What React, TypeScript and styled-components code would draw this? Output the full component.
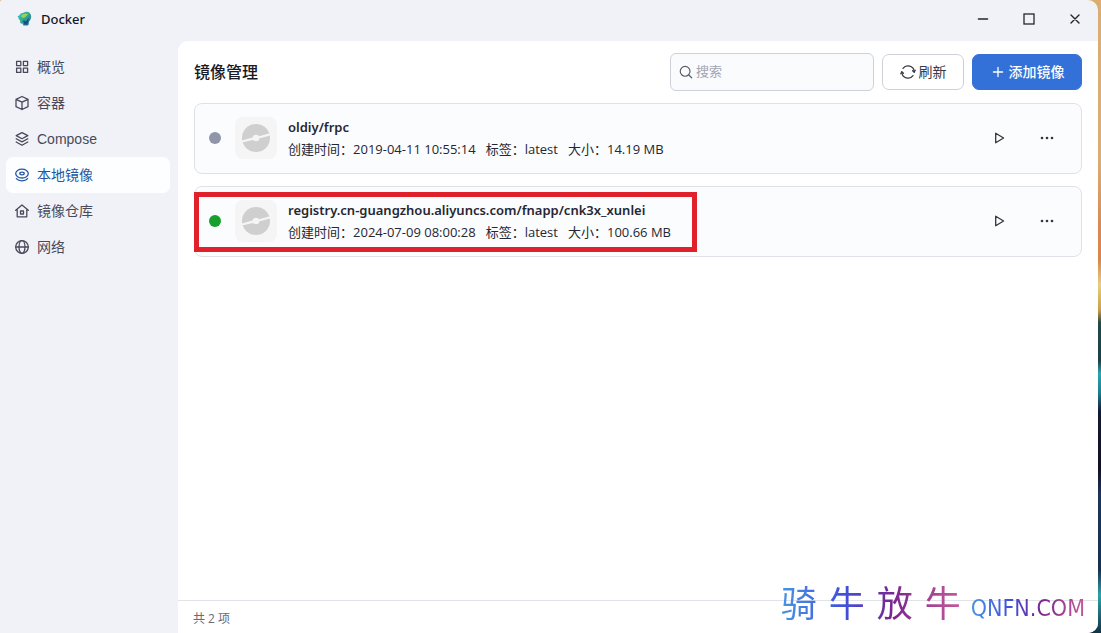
import React from "react";
import styled, { createGlobalStyle, css } from "styled-components";

const GlobalStyle = createGlobalStyle`
  *, *::before, *::after { box-sizing: border-box; }
  body {
    margin: 0;
    font-family: "Open Sans", "Noto Sans CJK SC", sans-serif;
    font-size: 14px;
    color: #1c1f2b;
  }
  button, input { font: inherit; color: inherit; }
  ul { list-style: none; margin: 0; padding: 0; }
  svg { display: block; flex: none; }
`;

const Desktop = styled.div`
  min-height: 100vh;
  display: flex;
  padding-right: 3px;
  background: linear-gradient(
    180deg,
    #d9ae70 0%,
    #dcae72 25%,
    #d98a50 36%,
    #d9854a 41%,
    #e6cf80 45%,
    #c9a040 49%,
    #22484a 51%,
    #1c3f4a 57%,
    #2ba5b0 59%,
    #1d7f90 62%,
    #141a33 65%,
    #120f28 74%,
    #1c3458 78%,
    #173050 90%,
    #2aa5a8 94%,
    #123244 100%
  );
`;

const Window = styled.div`
  flex: 1;
  min-width: 0;
  display: flex;
  flex-direction: column;
  background: #f1f2f7;
  border-radius: 2px 10px 10px 0;
  overflow: hidden;
`;

const TitleBar = styled.header`
  display: flex;
  align-items: center;
  height: 41px;
  padding: 0 0 3px 17px;
`;

const AppName = styled.span`
  flex: 1;
  margin-left: 8px;
  font-family: "Noto Sans", sans-serif;
  font-size: 13px;
  font-weight: 500;
  color: #15171f;
`;

const WindowButton = styled.button`
  display: grid;
  place-items: center;
  width: 46px;
  height: 36px;
  padding: 0;
  border: 0;
  background: none;
  color: #24262e;
`;

const Body = styled.div`
  flex: 1;
  display: flex;
`;

const Sidebar = styled.nav`
  flex: none;
  width: 178px;
  padding: 8px 8px 8px 6px;
`;

const NavLink = styled.a<{ $active?: boolean }>`
  display: flex;
  align-items: center;
  gap: 7px;
  height: 36px;
  padding: 0 8px;
  border-radius: 7px;
  font-family: "Liberation Sans", "Noto Sans CJK SC", sans-serif;
  font-size: 14px;
  line-height: 20px;
  color: #484a5c;
  text-decoration: none;
  ${(p) =>
    p.$active &&
    css`
      background: #fdfeff;
      color: #24569f;
    `}
`;

const Main = styled.main`
  flex: 1;
  min-width: 0;
  display: flex;
  flex-direction: column;
  background: #fff;
  border-top-left-radius: 10px;
`;

const Content = styled.div`
  flex: 1;
  padding: 12px 16px;
`;

const Toolbar = styled.div`
  display: flex;
  align-items: center;
  gap: 8px;
  margin-bottom: 12px;
`;

const PageTitle = styled.h1`
  flex: 1;
  margin: 0;
  font-size: 16px;
  line-height: 24px;
  font-weight: 500;
  color: #171924;
`;

const SearchBox = styled.label`
  display: flex;
  align-items: center;
  gap: 3px;
  width: 204px;
  height: 38px;
  padding: 0 8px;
  border: 1px solid #cfd1da;
  border-radius: 6px;
  background: #fafbfd;
  color: #555866;
`;

const SearchInput = styled.input`
  flex: 1;
  min-width: 0;
  padding: 0 0 2px;
  border: 0;
  outline: 0;
  background: none;
  font-size: 13px;
  &::placeholder { color: #a2a5b0; opacity: 1; }
`;

const ToolButton = styled.button<{ $primary?: boolean }>`
  display: flex;
  align-items: center;
  justify-content: center;
  gap: 3px;
  height: 36px;
  width: ${(p) => (p.$primary ? "110px" : "82px")};
  padding: 0 0 1px;
  border: 1px solid ${(p) => (p.$primary ? "#3371d8" : "#cfd1d8")};
  border-radius: 7px;
  background: ${(p) => (p.$primary ? "#3371d8" : "#fff")};
  color: ${(p) => (p.$primary ? "#fff" : "#383a45")};
  line-height: 20px;
  font-weight: ${(p) => (p.$primary ? 500 : 400)};
`;

const ImageList = styled.ul`
  display: flex;
  flex-direction: column;
  gap: 12px;
`;

const Card = styled.li`
  position: relative;
  display: flex;
  align-items: center;
  height: 71px;
  padding: 0 16px 2px 14px;
  border: 1px solid #dfe1e7;
  border-radius: 8px;
  background: #fbfcfe;
`;

const StatusDot = styled.span<{ $running: boolean }>`
  width: 12px;
  height: 12px;
  border-radius: 50%;
  background: ${(p) => (p.$running ? "#17a02c" : "#9195a9")};
`;

const Thumb = styled.div`
  display: grid;
  place-items: center;
  width: 42px;
  height: 42px;
  margin: 0 11px 0 14px;
  border-radius: 8px;
  background: #f5f5f6;
`;

const Info = styled.div`
  flex: 1;
  min-width: 0;
`;

const ImageName = styled.h2`
  margin: 0;
  font-family: "Noto Sans", "Noto Sans CJK SC", sans-serif;
  font-size: 13px;
  line-height: 22px;
  font-weight: 600;
  color: #252732;
`;

const Meta = styled.div`
  display: flex;
  gap: 10px;
  font-size: 13px;
  line-height: 22px;
  color: #252732;
`;

const Actions = styled.div`
  display: flex;
  gap: 12px;
`;

const IconButton = styled.button`
  display: grid;
  place-items: center;
  width: 36px;
  height: 36px;
  padding: 0;
  border: 0;
  background: none;
  color: #34363f;
`;

const Highlight = styled.div`
  position: absolute;
  top: 5px;
  left: -1px;
  width: 503px;
  height: 60px;
  border: 5px solid #e0202a;
  pointer-events: none;
`;

const Footer = styled.footer`
  position: relative;
  height: 33px;
  padding: 6px 15px;
  border-top: 1px solid #e1e3e8;
  font-size: 12px;
  line-height: 24px;
  color: #666977;
`;

const Watermark = styled.div`
  position: absolute;
  right: 13px;
  bottom: 0;
  display: flex;
  align-items: flex-end;
  gap: 10px;
  white-space: nowrap;
  pointer-events: none;
`;

const gradientText = css`
  background: linear-gradient(90deg, #4795e6 0%, #4050da 35%, #7a2590 62%, #c65a98 100%);
  background-clip: text;
  -webkit-background-clip: text;
  color: transparent;
`;

const Brand = styled.span`
  display: flex;
  gap: 12px;
  font-family: "Noto Sans CJK SC", sans-serif;
  font-size: 36px;
  line-height: 64px;
  ${gradientText}
`;

const Domain = styled.span`
  font-family: "Liberation Sans Narrow", "DejaVu Sans Condensed", sans-serif;
  font-size: 23px;
  line-height: 50px;
  ${gradientText}
`;

const Icon = ({ size = 16, width = 1.3, children }: { size?: number; width?: number; children: React.ReactNode }) => (
  <svg
    width={size}
    height={size}
    viewBox="0 0 16 16"
    fill="none"
    stroke="currentColor"
    strokeWidth={width}
    strokeLinecap="round"
    strokeLinejoin="round"
    aria-hidden="true"
  >
    {children}
  </svg>
);

const AppLogo = () => (
  <svg width="16" height="16" viewBox="0 0 16 16" aria-hidden="true">
    <defs>
      <linearGradient id="leaf" x1="0" y1="0" x2="1" y2="1">
        <stop offset="0" stopColor="#35c8dc" />
        <stop offset="0.45" stopColor="#35ad8c" />
        <stop offset="1" stopColor="#1b5fa5" />
      </linearGradient>
    </defs>
    <path d="M.4 5.400C2 5 2.700 3.200 4 2.400c1-.6 2-.4 2.800-.9 1.700-1.200 4.800-.8 6.200.7 1.500 1.600 1.600 4.600.3 6.500-.8 1.300-1.600 2-1.500 3.700 0 1.400-.8 2.200-2 2.200H6.800c-.8 0-1-1-1-2-1.500.3-2.600-.3-2.700-1.300-.1-.8.300-1.300-.1-2C2.500 8.300 1 7.800 1.700 6.900z" fill="url(#leaf)" />
    <path d="M4 5c2-2.700 5.600-2.800 7.200-1.200-2 .2-2.200 2.400-4 2.900C5.800 7.100 4.600 6.300 4 5z" fill="#a5cf52" />
    <path d="M6 9.300l3 1 2.900-3.600-.7 4.200-1.500 2.600H7.200z" fill="#17508a" />
  </svg>
);

const navItems = [
  {
    label: "概览",
    icon: (
      <>
        <rect x="2.600" y="2.400" width="4.200" height="4.200" />
        <rect x="9.400" y="2.400" width="4.200" height="4.200" />
        <rect x="2.600" y="9.200" width="4.200" height="4.200" />
        <rect x="9.400" y="9.200" width="4.200" height="4.200" />
      </>
    ),
  },
  {
    label: "容器",
    icon: <path d="M8 1.500l6 2.800v7.400l-6 2.800-6-2.800V4.300zM2 4.300l6 2.900 6-2.900M8 7.200v7.300" />,
  },
  {
    label: "Compose",
    icon: <path d="M8 1.600l5.800 3L8 7.700 2.200 4.600zM2.200 7.800L8 10.900l5.800-3.100M2.200 11L8 14.200l5.800-3.200" />,
  },
  {
    label: "本地镜像",
    active: true,
    icon: (
      <>
        <ellipse cx="8" cy="6.600" rx="6.300" ry="4.400" />
        <ellipse cx="8" cy="6.500" rx="2.200" ry="1.300" />
        <path d="M2.400 11.600c2.300 2.900 8.900 2.900 11.200 0" />
      </>
    ),
  },
  {
    label: "镜像仓库",
    icon: (
      <>
        <path d="M1.700 7.300L8 2l6.300 5.300M3.200 6.200v7.600h9.600V6.200" />
        <rect x="6.500" y="8" width="3" height="3" />
      </>
    ),
  },
  {
    label: "网络",
    icon: (
      <>
        <circle cx="8" cy="8" r="6.300" />
        <ellipse cx="8" cy="8" rx="3" ry="6.300" />
        <path d="M1.700 8h12.600" />
      </>
    ),
  },
];

const images = [
  { name: "oldiy/frpc", created: "2019-04-11 10:55:14", tag: "latest", size: "14.19 MB", running: false },
  {
    name: "registry.cn-guangzhou.aliyuncs.com/fnapp/cnk3x_xunlei",
    created: "2024-07-09 08:00:28",
    tag: "latest",
    size: "100.66 MB",
    running: true,
    highlighted: true,
  },
];

const DiscIcon = () => (
  <svg width="28" height="28" viewBox="0 0 28 28" aria-hidden="true">
    <circle cx="14" cy="14" r="14" fill="#cfcfd0" />
    <path d="M0 16.400L12 13v2.800L0 18.600zM28 9.200L16 12.400v2.400l12-3.200z" fill="#f5f5f6" />
    <circle cx="14" cy="14" r="3.300" fill="#f5f5f6" />
  </svg>
);

export default function App() {
  return (
    <>
      <GlobalStyle />
      <Desktop>
        <Window>
          <TitleBar>
            <AppLogo />
            <AppName>Docker</AppName>
            <WindowButton aria-label="最小化">
              <Icon width={1.6}><path d="M3.500 8h9" /></Icon>
            </WindowButton>
            <WindowButton aria-label="最大化">
              <Icon><rect x="3" y="3" width="10" height="10" strokeLinejoin="miter" /></Icon>
            </WindowButton>
            <WindowButton aria-label="关闭">
              <Icon width={1.4}><path d="M4 4l8 8M12 4l-8 8" /></Icon>
            </WindowButton>
          </TitleBar>
          <Body>
            <Sidebar>
              <ul>
                {navItems.map((item) => (
                  <li key={item.label}>
                    <NavLink href="#" $active={item.active} aria-current={item.active ? "page" : undefined}>
                      <Icon>{item.icon}</Icon>
                      {item.label}
                    </NavLink>
                  </li>
                ))}
              </ul>
            </Sidebar>
            <Main>
              <Content>
                <Toolbar>
                  <PageTitle>镜像管理</PageTitle>
                  <SearchBox>
                    <Icon size={14} width={1.3}>
                      <circle cx="7" cy="7.200" r="5.600" />
                      <path d="M11.200 11.400l3.300 3.200" />
                    </Icon>
                    <SearchInput type="text" placeholder="搜索" aria-label="搜索" />
                  </SearchBox>
                  <ToolButton>
                    <Icon width={1.3}>
                      <path d="M3 4.400A6.200 6.200 0 0 1 14.200 7.800M13 11.600A6.200 6.200 0 0 1 1.800 8.200" />
                      <path d="M12.600 6.800l1.600 1.400 1-1.900M3.400 9.200L1.800 7.800.8 9.700" />
                    </Icon>
                    刷新
                  </ToolButton>
                  <ToolButton $primary>
                    <Icon width={1.3}><path d="M8 3.400v9.200M3.400 8h9.200" /></Icon>
                    添加镜像
                  </ToolButton>
                </Toolbar>
                <ImageList>
                  {images.map((image) => (
                    <Card key={image.name}>
                      <StatusDot $running={image.running} />
                      <Thumb><DiscIcon /></Thumb>
                      <Info>
                        <ImageName>{image.name}</ImageName>
                        <Meta>
                          <span>创建时间：{image.created}</span>
                          <span>标签：{image.tag}</span>
                          <span>大小：{image.size}</span>
                        </Meta>
                      </Info>
                      <Actions>
                        <IconButton aria-label="运行">
                          <Icon width={1.3}><path d="M4.700 3.200v9.600L12.600 8z" /></Icon>
                        </IconButton>
                        <IconButton aria-label="更多">
                          <Icon>
                            <g fill="currentColor" stroke="none">
                              <circle cx="3" cy="8" r="1.300" />
                              <circle cx="8" cy="8" r="1.300" />
                              <circle cx="13" cy="8" r="1.300" />
                            </g>
                          </Icon>
                        </IconButton>
                      </Actions>
                      {image.highlighted && <Highlight />}
                    </Card>
                  ))}
                </ImageList>
              </Content>
              <Footer>
                共 2 项
                <Watermark>
                  <Brand>
                    <span>骑</span>
                    <span>牛</span>
                    <span>放</span>
                    <span>牛</span>
                  </Brand>
                  <Domain>QNFN.COM</Domain>
                </Watermark>
              </Footer>
            </Main>
          </Body>
        </Window>
      </Desktop>
    </>
  );
}
